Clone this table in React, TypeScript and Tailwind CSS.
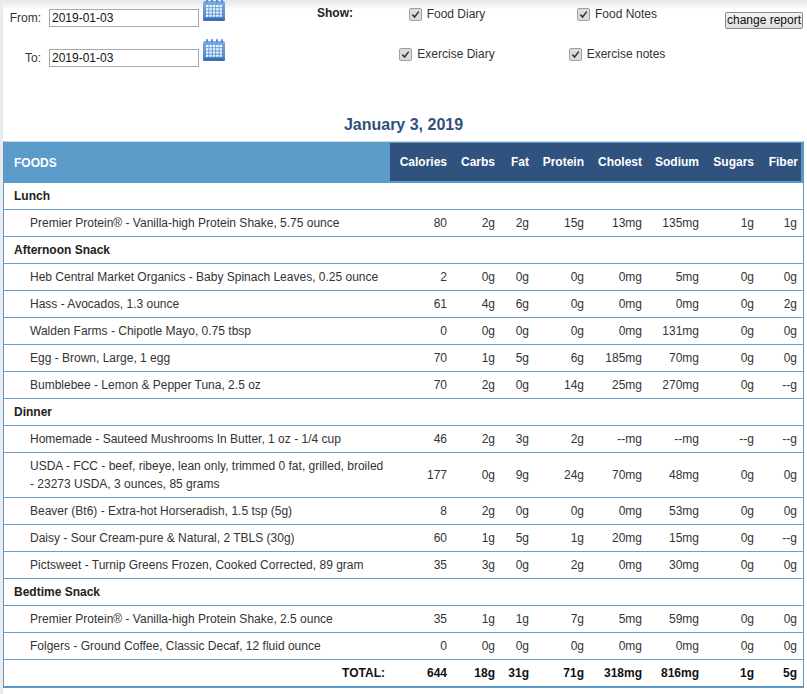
import React from "react";

type Food = { name: string; v: string[] };
type Meal = { meal: string; foods: Food[] };

const meals: Meal[] = [
  {
    meal: "Lunch",
    foods: [
      { name: "Premier Protein® - Vanilla-high Protein Shake, 5.75 ounce", v: ["80", "2g", "2g", "15g", "13mg", "135mg", "1g", "1g"] },
    ],
  },
  {
    meal: "Afternoon Snack",
    foods: [
      { name: "Heb Central Market Organics - Baby Spinach Leaves, 0.25 ounce", v: ["2", "0g", "0g", "0g", "0mg", "5mg", "0g", "0g"] },
      { name: "Hass - Avocados, 1.3 ounce", v: ["61", "4g", "6g", "0g", "0mg", "0mg", "0g", "2g"] },
      { name: "Walden Farms - Chipotle Mayo, 0.75 tbsp", v: ["0", "0g", "0g", "0g", "0mg", "131mg", "0g", "0g"] },
      { name: "Egg - Brown, Large, 1 egg", v: ["70", "1g", "5g", "6g", "185mg", "70mg", "0g", "0g"] },
      { name: "Bumblebee - Lemon & Pepper Tuna, 2.5 oz", v: ["70", "2g", "0g", "14g", "25mg", "270mg", "0g", "--g"] },
    ],
  },
  {
    meal: "Dinner",
    foods: [
      { name: "Homemade - Sauteed Mushrooms In Butter, 1 oz - 1/4 cup", v: ["46", "2g", "3g", "2g", "--mg", "--mg", "--g", "--g"] },
      { name: "USDA - FCC - beef, ribeye, lean only, trimmed 0 fat, grilled, broiled - 23273 USDA, 3 ounces, 85 grams", v: ["177", "0g", "9g", "24g", "70mg", "48mg", "0g", "0g"] },
      { name: "Beaver (Bt6) - Extra-hot Horseradish, 1.5 tsp (5g)", v: ["8", "2g", "0g", "0g", "0mg", "53mg", "0g", "0g"] },
      { name: "Daisy - Sour Cream-pure & Natural, 2 TBLS (30g)", v: ["60", "1g", "5g", "1g", "20mg", "15mg", "0g", "--g"] },
      { name: "Pictsweet - Turnip Greens Frozen, Cooked Corrected, 89 gram", v: ["35", "3g", "0g", "2g", "0mg", "30mg", "0g", "0g"] },
    ],
  },
  {
    meal: "Bedtime Snack",
    foods: [
      { name: "Premier Protein® - Vanilla-high Protein Shake, 2.5 ounce", v: ["35", "1g", "1g", "7g", "5mg", "59mg", "0g", "0g"] },
      { name: "Folgers - Ground Coffee, Classic Decaf, 12 fluid ounce", v: ["0", "0g", "0g", "0g", "0mg", "0mg", "0g", "0g"] },
    ],
  },
];

const totals = ["644", "18g", "31g", "71g", "318mg", "816mg", "1g", "5g"];
const columns = ["Calories", "Carbs", "Fat", "Protein", "Cholest", "Sodium", "Sugars", "Fiber"];
const widths = ["w-[63px]", "w-[48px]", "w-[34px]", "w-[55px]", "w-[58px]", "w-[57px]", "w-[55px]", "w-[43px]"];

function CalendarIcon() {
  return (
    <svg width="24" height="24" viewBox="0 0 24 24" className="block">
      <defs>
        <linearGradient id="calg" x1="0" y1="0" x2="0" y2="1">
          <stop offset="0" stopColor="#7aaee6" />
          <stop offset="1" stopColor="#4a80c8" />
        </linearGradient>
      </defs>
      <rect x="1" y="3" width="22" height="20" rx="2" fill="url(#calg)" />
      <rect x="1" y="20" width="22" height="3" rx="1.5" fill="#3b6fb5" />
      {[4, 9, 14, 19].map((x) => (
        <rect key={x} x={x} y="1" width="2" height="4" rx="1" fill="#5b8fd4" />
      ))}
      {[0, 1, 2, 3].map((r) =>
        [0, 1, 2, 3, 4].map((c) => (
          <rect key={`${r}-${c}`} x={4 + c * 3.4} y={7 + r * 3.2} width="2.4" height="2.2" fill="#ffffff" opacity="0.95" />
        ))
      )}
    </svg>
  );
}

function Check({ label }: { label: string }) {
  return (
    <div className="flex items-center justify-center gap-[5px] h-[20px]">
      <span className="w-[13px] h-[13px] rounded-[2px] border border-[#a0a0a0] bg-[#dcdcdc] flex items-center justify-center">
        <svg width="9" height="9" viewBox="0 0 10 10">
          <path d="M1.5 5.2 L4 7.8 L8.6 1.8" fill="none" stroke="#3a3a3a" strokeWidth="1.8" />
        </svg>
      </span>
      <span className="text-[12px] text-[#333]">{label}</span>
    </div>
  );
}

function DateRow({ label, value, top }: { label: string; value: string; top: string }) {
  return (
    <div className={`flex items-start ${top}`}>
      <span className="w-[38px] text-right text-[12px] leading-[18px] text-[#333]">{label}</span>
      <div className="ml-[8px] w-[150px] h-[18px] border border-[#a9a9a9] pl-[2px] text-[12px] leading-[16px] text-[#111]">
        {value}
      </div>
      <div className="ml-[3px] -mt-[11px]">
        <CalendarIcon />
      </div>
    </div>
  );
}

export default function App() {
  return (
    <div className="relative min-h-screen bg-white border-l-[3px] border-[#ebebeb] font-['Liberation_Sans',Arial,sans-serif]">
      <div className="absolute left-0 right-0 top-0 h-[10px] bg-gradient-to-b from-[#e6e6e6] to-white pointer-events-none" />
      <div className="relative w-[801px]">
        {/* report options */}
        <div className="flex items-start h-[114px]">
          <div className="w-[302px]">
            <DateRow label="From:" value="2019-01-03" top="mt-[9px]" />
            <DateRow label="To:" value="2019-01-03" top="mt-[22px]" />
          </div>
          <div className="w-[62px] pl-[12px] pt-[6px] text-[12px] leading-[14px] font-bold text-[#222]">Show:</div>
          <div className="w-[160px] pt-[4px] flex flex-col gap-[20px]">
            <Check label="Food Diary" />
            <Check label="Exercise Diary" />
          </div>
          <div className="w-[180px] pt-[4px] flex flex-col gap-[20px]">
            <Check label="Food Notes" />
            <Check label="Exercise notes" />
          </div>
          <div className="flex pl-[18px] pt-[12px]">
            <button className="block h-[17px] px-[1px] whitespace-nowrap border border-[#8a8a8a] rounded-[2px] bg-gradient-to-b from-[#f4f4f4] to-[#dedede] text-[12px] leading-[15px] text-[#111]">
              change report
            </button>
          </div>
        </div>

        <h2 className="pt-[1px] text-center text-[16px] leading-[20px] font-bold text-[#30507c]">January 3, 2019</h2>

        <div className="mt-[6px] border border-[#5b97c7] border-t-[#cfd6dd] border-b-2">
          <table className="table-fixed border-separate border-spacing-0 w-[799px] text-[12px] leading-[18px]">
            <colgroup>
              <col className="w-[386px]" />
              {widths.map((w, i) => (
                <col key={i} className={w} />
              ))}
            </colgroup>
            <thead>
              <tr className="bg-[#5b9bc9]">
                <th className="h-[41px] pl-[10px] text-left font-bold text-white">FOODS</th>
                {columns.map((c, i) => (
                  <th
                    key={c}
                    className={`h-[41px] bg-[#30527f] border-t border-b-2 border-[#5b9bc9] text-right font-bold text-white ${
                      i === columns.length - 1 ? "border-r-2 pr-[3px]" : "pr-[6px]"
                    }`}
                  >
                    {c}
                  </th>
                ))}
              </tr>
            </thead>
            <tbody>
              {meals.map((m) => (
                <React.Fragment key={m.meal}>
                  <tr>
                    <td colSpan={9} className="py-[4px] pl-[10px] font-bold text-[#222] border-b border-[#6a9fd0]">
                      {m.meal}
                    </td>
                  </tr>
                  {m.foods.map((f, fi) => (
                    <tr key={fi}>
                      <td className="py-[4px] pl-[26px] pr-[5px] text-[#333] border-b border-[#6a9fd0]">{f.name}</td>
                      {f.v.map((val, vi) => (
                        <td key={vi} className="py-[4px] pr-[6px] text-right text-[#333] border-b border-[#6a9fd0]">
                          {val}
                        </td>
                      ))}
                    </tr>
                  ))}
                </React.Fragment>
              ))}
              <tr>
                <td className="py-[4px] pr-[5px] text-right font-bold text-[#111]">TOTAL:</td>
                {totals.map((t, i) => (
                  <td key={i} className="py-[4px] pr-[6px] text-right font-bold text-[#111]">
                    {t}
                  </td>
                ))}
              </tr>
            </tbody>
          </table>
        </div>
      </div>
    </div>
  );
}
